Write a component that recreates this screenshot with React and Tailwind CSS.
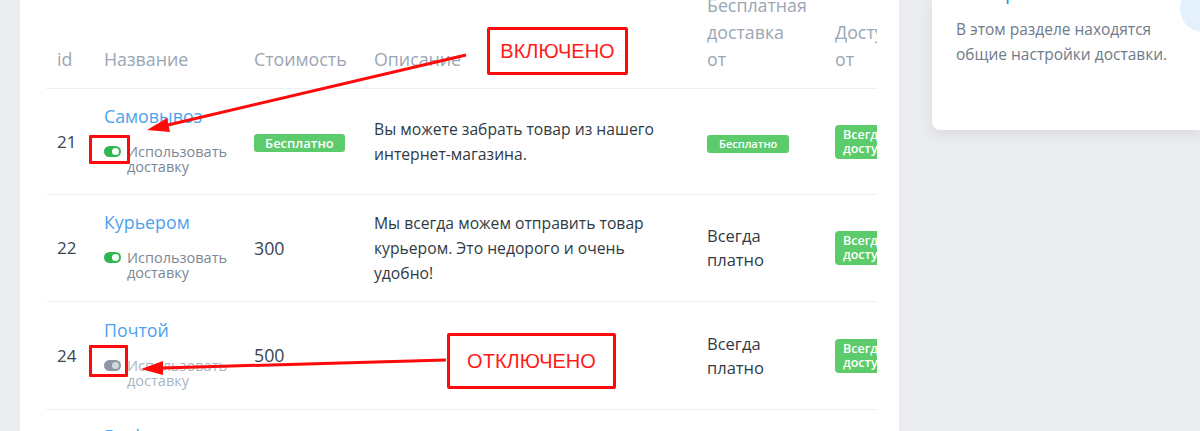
import React from 'react';

const rows = [
  {
    id: 21,
    name: 'Самовывоз',
    enabled: true,
    cost: 'free',
    desc: ['Вы можете забрать товар из нашего', 'интернет-магазина.'],
    freeFrom: 'badge',
    height: 'h-[106px]',
  },
  {
    id: 22,
    name: 'Курьером',
    enabled: true,
    cost: '300',
    desc: ['Мы всегда можем отправить товар', 'курьером. Это недорого и очень', 'удобно!'],
    freeFrom: 'text',
    height: 'h-[107px]',
  },
  {
    id: 24,
    name: 'Почтой',
    enabled: false,
    cost: '500',
    desc: [],
    freeFrom: 'text',
    height: 'h-[108px]',
  },
  {
    id: 25,
    name: 'Boxberry',
    enabled: true,
    cost: '400',
    desc: ['Доставка в пункты выдачи.'],
    freeFrom: 'text',
    height: 'h-[105px]',
  },
];

const Toggle = ({ on }) => (
  <span
    className={
      on
        ? 'mt-[2px] flex h-[11px] w-[17px] shrink-0 items-center justify-end rounded-full bg-[#2fb84f] pr-[2px]'
        : 'mt-[2px] flex h-[11px] w-[17px] shrink-0 items-center justify-end rounded-full bg-[#8e98a4] pr-[2px]'
    }
  >
    <span className={on ? 'h-[7px] w-[7px] rounded-full bg-white' : 'h-[7px] w-[7px] rounded-full bg-[#d3d8de]'} />
  </span>
);

const App = () => {
  return (
    <div className="relative h-[431px] w-[1200px] overflow-hidden bg-[#ebecef] font-['Open_Sans',sans-serif]">
      <div className="flex items-start">
        {/* Delivery table */}
        <div className="ml-[20px] h-[431px] w-[879px] shrink-0 bg-white pl-[26px] pr-[22px]">
          <div className="overflow-hidden">
            <table className="-mt-[8px] w-[900px] table-fixed border-collapse">
              <colgroup>
                <col className="w-[47px]" />
                <col className="w-[150px]" />
                <col className="w-[120px]" />
                <col className="w-[333px]" />
                <col className="w-[128px]" />
                <col className="w-[122px]" />
              </colgroup>
              <thead>
                <tr className="h-[96px] border-b border-[#eef0f3] text-left align-bottom text-[17.8px] leading-[27px] font-normal text-[#9aa6b4]">
                  <th className="pb-[15px] pl-[11px] font-normal">id</th>
                  <th className="pb-[15px] pl-[11px] font-normal">Название</th>
                  <th className="pb-[15px] pl-[11px] font-normal">Стоимость</th>
                  <th className="pb-[15px] pl-[11px] font-normal">Описание</th>
                  <th className="pb-[15px] pl-[11px] font-normal whitespace-nowrap">
                    Бесплатная
                    <br />
                    доставка
                    <br />
                    от
                  </th>
                  <th className="pb-[15px] pl-[11px] font-normal whitespace-nowrap">
                    Доступно
                    <br />
                    от
                  </th>
                </tr>
              </thead>
              <tbody>
                {rows.map((row) => (
                  <tr key={row.id} className={`${row.height} border-b border-[#eef0f3] align-middle`}>
                    <td className="pl-[11px] text-[17px] text-[#3a4550]">{row.id}</td>
                    <td className="pb-[6px] pl-[11px]">
                      <div className="text-[17.8px] leading-[24px] text-[#4ca2ee]">{row.name}</div>
                      <div className="mt-[16px] flex items-start gap-[6px]">
                        <Toggle on={row.enabled} />
                        <div
                          className={
                            row.enabled
                              ? 'text-[14.5px] leading-[15px] text-[#7b8794]'
                              : 'text-[14.5px] leading-[15px] text-[#aab4bf]'
                          }
                        >
                          Использовать
                          <br />
                          доставку
                        </div>
                      </div>
                    </td>
                    <td className="pl-[11px]">
                      {row.cost === 'free' ? (
                        <span className="inline-block rounded-[3px] bg-[#5ccb6b] px-[11px] text-[13px] leading-[18px] font-semibold text-white">
                          Бесплатно
                        </span>
                      ) : (
                        <span className="text-[17.8px] text-[#3a4550]">{row.cost}</span>
                      )}
                    </td>
                    <td className="pl-[11px] text-[15.7px] leading-[25px] text-[#2f3a45]">
                      {row.desc.map((line) => (
                        <div key={line} className="whitespace-nowrap">
                          {line}
                        </div>
                      ))}
                    </td>
                    <td className="pl-[11px]">
                      {row.freeFrom === 'badge' ? (
                        <span className="inline-block rounded-[3px] bg-[#5ccb6b] px-[12px] text-[11px] leading-[18px] font-semibold text-white">
                          Бесплатно
                        </span>
                      ) : (
                        <div className="text-[16.5px] leading-[24px] text-[#2f3a45]">
                          Всегда
                          <br />
                          платно
                        </div>
                      )}
                    </td>
                    <td className="pl-[11px]">
                      <span className="inline-block rounded-[4px] bg-[#5ccb6b] px-[8px] py-[3px] text-[12.5px] leading-[14px] font-semibold whitespace-nowrap text-white">
                        Всегда
                        <br />
                        доступно
                      </span>
                    </td>
                  </tr>
                ))}
              </tbody>
            </table>
          </div>
        </div>

        {/* Help card */}
        <div className="relative ml-[33px] h-[130px] flex-1 overflow-hidden rounded-bl-[8px] bg-white pl-[24px] shadow-[0_4px_14px_rgba(0,0,0,0.08)]">
          <div className="absolute -top-[14px] -right-[26px] h-[46px] w-[46px] rounded-full bg-[#e4f1fd]" />
          <div className="-mt-[21px] flex h-[26px] items-center gap-[8px] text-[20px] leading-[26px] text-[#2d8cf0]">
            <span className="h-[16px] w-[16px] rounded-full border-[3px] border-[#2d8cf0]" />
            <span>Справка</span>
          </div>
          <div className="mt-[12px] text-[15.5px] leading-[25px] text-[#6f7b89]">
            В этом разделе находятся
            <br />
            общие настройки доставки.
          </div>
        </div>
      </div>

      {/* Annotations */}
      <svg className="pointer-events-none absolute inset-0" width="1200" height="431">
        <line x1="466" y1="55" x2="168" y2="125" stroke="#ff0a0a" strokeWidth="3" />
        <polygon points="147,130 170,132 167,118" fill="#ff0a0a" />
        <line x1="446" y1="360" x2="163" y2="368" stroke="#ff0a0a" strokeWidth="3" />
        <polygon points="141,369 163,375 163,361" fill="#ff0a0a" />
      </svg>
      <div className="pointer-events-none absolute top-[27px] left-[487px] flex h-[48px] w-[141px] items-center justify-center rounded-[2px] border-[3px] border-[#ff0a0a] bg-white font-['Liberation_Sans',sans-serif] text-[20px] text-[#ff1a1a]">
        ВКЛЮЧЕНО
      </div>
      <div className="pointer-events-none absolute top-[333px] left-[447px] flex h-[56px] w-[169px] items-center justify-center rounded-[2px] border-[3px] border-[#ff0a0a] bg-white font-['Liberation_Sans',sans-serif] text-[20px] text-[#ff1a1a]">
        ОТКЛЮЧЕНО
      </div>
      <div className="pointer-events-none absolute top-[135px] left-[89px] h-[29px] w-[41px] rounded-[1px] border-[3px] border-[#ff0a0a]" />
      <div className="pointer-events-none absolute top-[345px] left-[89px] h-[32px] w-[39px] rounded-[1px] border-[3px] border-[#ff0a0a]" />
    </div>
  );
};

export default App;
